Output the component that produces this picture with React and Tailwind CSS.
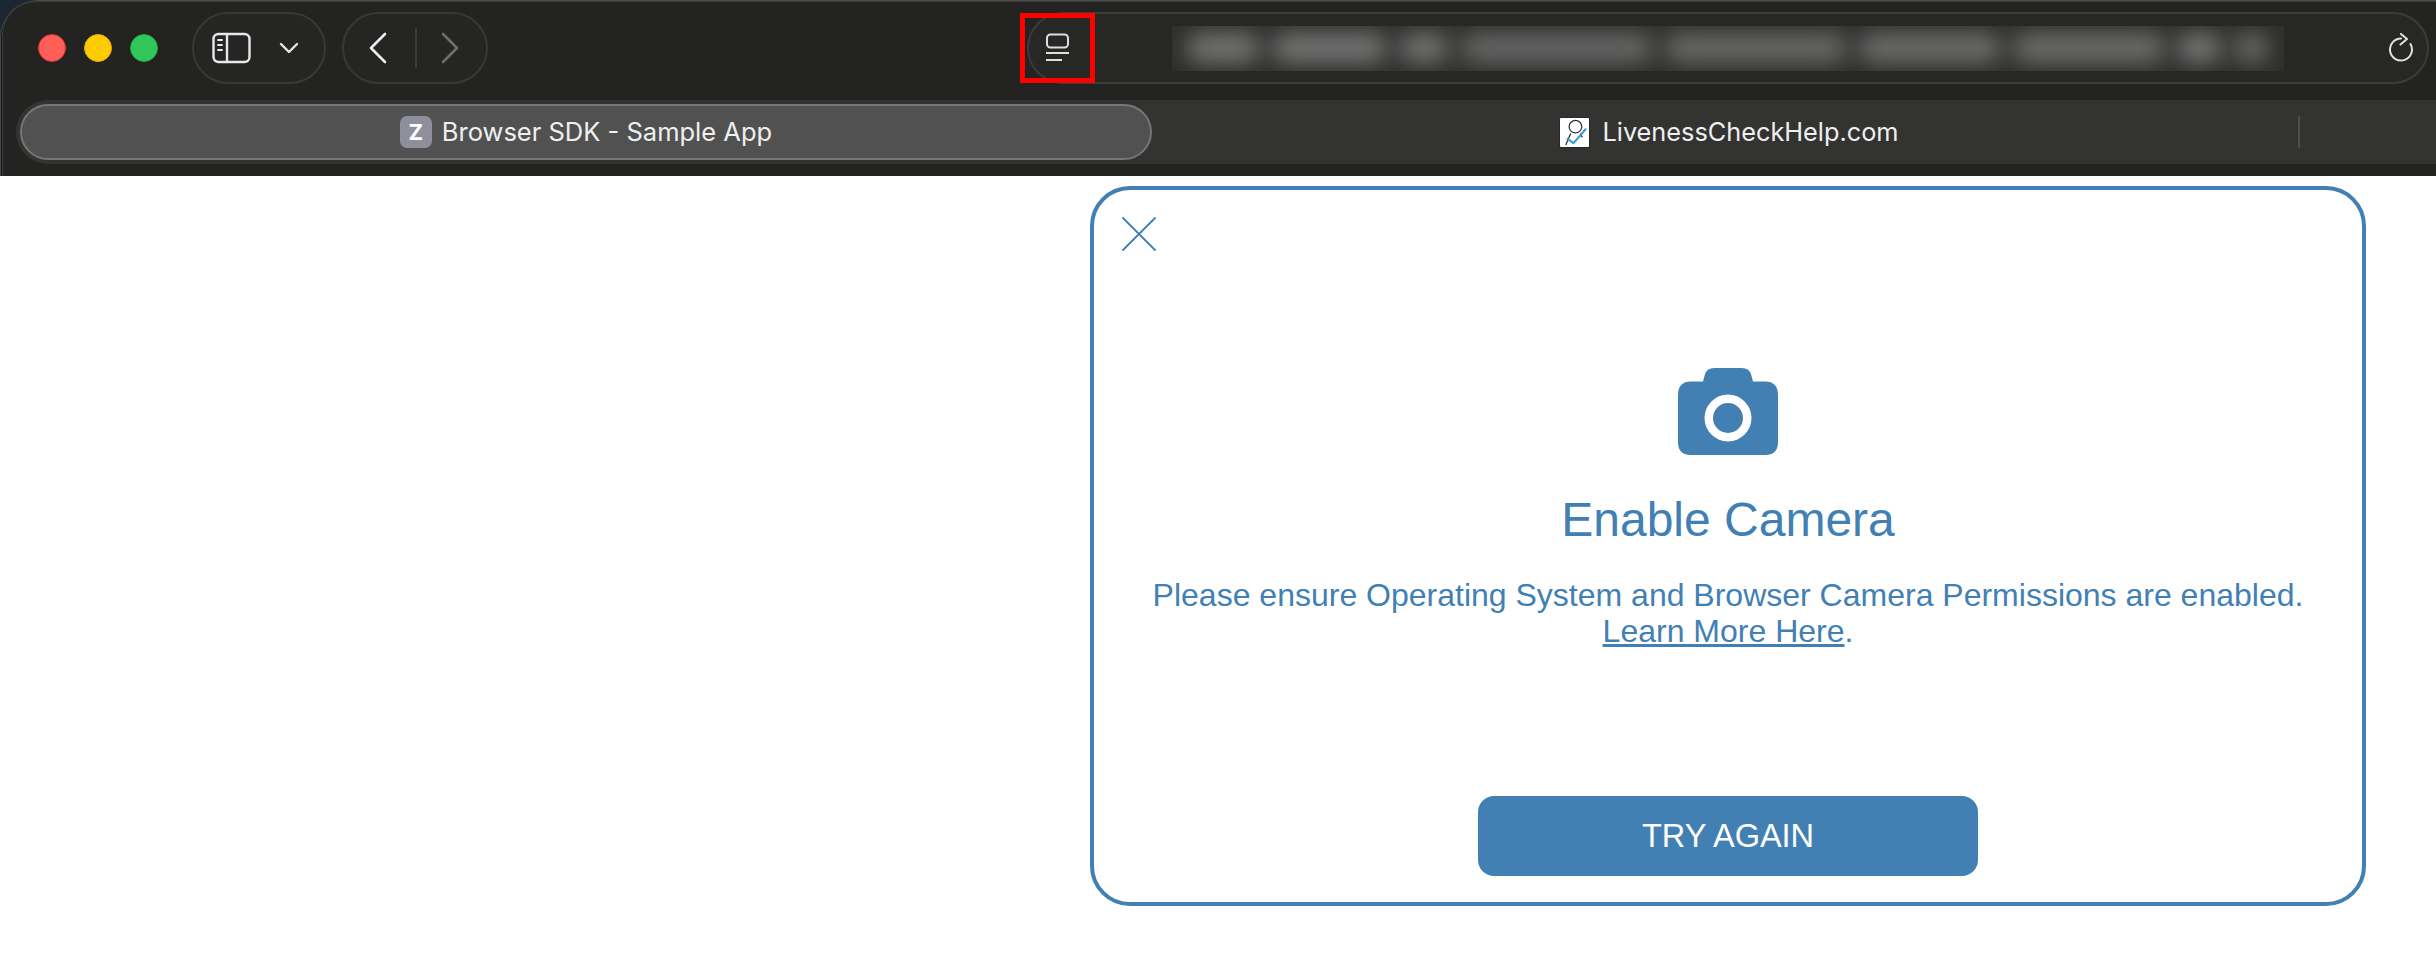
import React from 'react';

const TrafficLight = ({ className }) => (
  <span className={`w-[28px] h-[28px] rounded-full border ${className}`}></span>
);

const SidebarIcon = () => (
  <svg width="40" height="32" viewBox="0 0 40 32" fill="none" stroke="#e8e8e8" strokeWidth="2.4" strokeLinecap="round">
    <rect x="1.5" y="2" width="36" height="28" rx="5" />
    <path d="M15 2v28" />
    <path d="M6 8h4M6 13h4M6 18h4" strokeWidth="1.8" />
  </svg>
);

const ReaderIcon = () => (
  <svg width="26" height="30" viewBox="0 0 26 30" fill="none" stroke="#dedede" strokeWidth="2" className="shrink-0">
    <rect x="2" y="1.5" width="21" height="13" rx="3.5" />
    <path d="M1 20h23M1 27h16" />
  </svg>
);

const ReloadIcon = () => (
  <svg width="26" height="30" viewBox="0 0 26 30" fill="none" stroke="#e2e2e2" strokeWidth="2" strokeLinecap="round" strokeLinejoin="round" className="shrink-0">
    <path d="M13 5.500A11 11 0 1 0 22.500 11" />
    <path d="M13 1L19 6L12.500 11.500" />
  </svg>
);

const LivenessLogo = () => (
  <svg width="31" height="31" viewBox="0 0 32 32" className="shrink-0">
    <rect x="0.500" y="0.500" width="31" height="31" rx="1.500" fill="#fff" stroke="#222" />
    <circle cx="17" cy="10" r="6.500" fill="none" stroke="#333" strokeWidth="1.300" />
    <path d="M12 17L7 29M22 17l2 4" fill="none" stroke="#333" strokeWidth="1.300" />
    <path d="M8 22l7 5L28 12" fill="none" stroke="#3d9ad6" strokeWidth="2.200" />
  </svg>
);

const CameraIcon = () => (
  <svg width="100" height="87" viewBox="0 0 100 87">
    <path
      fillRule="evenodd"
      fill="#4280b4"
      d="M25 13.500 27 6Q29 0 36 0H64Q71 0 73 6L75 13.500H87Q100 13.500 100 27V74Q100 87 87 87H13Q0 87 0 74V27Q0 13.500 13 13.500ZM50 26.500A23.500 23.500 0 1 0 50 73.500A23.500 23.500 0 1 0 50 26.500ZM50 35A15 15 0 1 1 50 65A15 15 0 1 1 50 35Z"
    />
  </svg>
);

// sizes of the smudges over the address
const blurs = [
  { w: 75, c: 'bg-[#737372]' },
  { w: 117, c: 'bg-[#737372]' },
  { w: 52, c: 'bg-[#717170]' },
  { w: 194, c: 'bg-[#666665]' },
  { w: 184, c: 'bg-[#686867]' },
  { w: 144, c: 'bg-[#6c6c6b]' },
  { w: 154, c: 'bg-[#6c6c6b]' },
  { w: 47, c: 'bg-[#747473]' },
  { w: 36, c: 'bg-[#686867]' },
];

const App = () => {
  return (
    <div className="w-[2436px] h-[962px] bg-white overflow-hidden font-['Liberation_Sans',sans-serif]">
      {/* Browser chrome */}
      <div className="h-[176px] bg-[#1c2530]">
        <div className="h-full bg-[#111111] rounded-tl-[38px] border-l border-t border-[#4a4a4a]">
          <div className="h-full bg-[#232322] rounded-tl-[34px] ml-[1px] border-l border-t border-[#3c3c3c] font-['Inter',sans-serif]">
            <div className="flex items-center h-[82px] pt-[10px] pl-[35px] pr-[7px]">
              <div className="flex gap-[18px] w-[154px] shrink-0">
                <TrafficLight className="bg-[#ff5f57] border-[#e0303a]" />
                <TrafficLight className="bg-[#fecb00] border-[#e0ab10]" />
                <TrafficLight className="bg-[#32c758] border-[#1ca83a]" />
              </div>

              <div className="flex items-center shrink-0 w-[134px] h-[72px] rounded-full border-2 border-[#383837] bg-[#252524] pl-[18px]">
                <SidebarIcon />
                <svg width="20" height="14" viewBox="0 0 20 14" fill="none" stroke="#e8e8e8" strokeWidth="2.400" strokeLinecap="round" strokeLinejoin="round" className="ml-[27px]">
                  <path d="M2 3l8 8 8-8" />
                </svg>
              </div>

              <div className="flex items-center shrink-0 w-[146px] h-[72px] rounded-full border-2 border-[#383837] bg-[#252524] ml-[16px] pl-[24px]">
                <svg width="20" height="32" viewBox="0 0 20 32" fill="none" stroke="#efefef" strokeWidth="2.600" strokeLinecap="round" strokeLinejoin="round">
                  <path d="M17 2L3 16l14 14" />
                </svg>
                <span className="w-[2px] h-[40px] bg-[#3d3d3c] ml-[27px]"></span>
                <svg width="20" height="32" viewBox="0 0 20 32" fill="none" stroke="#6e6e6d" strokeWidth="2.600" strokeLinecap="round" strokeLinejoin="round" className="ml-[23px]">
                  <path d="M3 2l14 14L3 30" />
                </svg>
              </div>

              <div className="relative flex items-center flex-1 min-w-0 h-[72px] ml-[539px] rounded-full border-2 border-[#3c3d3b] bg-[#272726] pl-[16px] pr-[13px]">
                <ReaderIcon />
                <div className="flex items-center gap-[10px] flex-1 min-w-0 h-[45px] ml-[101px] mr-[104px] pl-[14px] overflow-hidden bg-[#2e2e2d]">
                  {blurs.map((b, i) => (
                    <span key={i} style={{ width: b.w }} className={`h-[30px] shrink-0 rounded-full blur-[11px] ${b.c}`}></span>
                  ))}
                </div>
                <ReloadIcon />
                {/* red marker drawn over the screenshot */}
                <span className="absolute left-[-9px] top-[-1px] w-[75px] h-[70px] border-[5px] border-[#fd0000]"></span>
              </div>
            </div>

            {/* Tabs */}
            <div className="flex items-center h-[64px] mt-[16px] ml-[13px] rounded-l-[32px] bg-[#333332] pl-[4px]">
              <div className="flex items-center justify-center gap-[10px] w-[1132px] h-[56px] rounded-full border-2 border-[#767674] bg-[#515151] shrink-0">
                <span className="w-[32px] h-[32px] rounded-[7px] bg-[#8f8f9c] flex items-center justify-center text-white text-[22px] font-bold">Z</span>
                <span className="text-[25.500px] text-[#efefef]">Browser SDK - Sample App</span>
              </div>
              <div className="flex items-center justify-center gap-[12px] flex-1 pl-[8px]">
                <LivenessLogo />
                <span className="text-[25.300px] text-[#efefef]">LivenessCheckHelp.com</span>
              </div>
              <span className="w-[2px] h-[32px] bg-[#4d4d4c] mr-[136px]"></span>
            </div>
          </div>
        </div>
      </div>

      {/* Page */}
      <div className="flex justify-end pt-[10px] pr-[70px]">
        <div className="relative flex flex-col items-center w-[1276px] h-[720px] rounded-[40px] border-[4px] border-[#4280b4] text-[#4280b4]">
          <svg width="34" height="34" viewBox="0 0 34 34" fill="none" stroke="#4280b4" strokeWidth="1.800" strokeLinecap="round" className="absolute left-[28px] top-[27px]">
            <path d="M1 1l32 32M33 1L1 33" />
          </svg>
          <div className="mt-[178px]">
            <CameraIcon />
          </div>
          <h1 className="mt-[37px] text-[48px] leading-[56px] font-normal">Enable Camera</h1>
          <p className="mt-[29px] text-[32px] leading-[36px] text-center">
            Please ensure Operating System and Browser Camera Permissions are enabled.
            <br />
            <a href="#" className="underline">Learn More Here</a>.
          </p>
          <button className="mt-[147px] w-[500px] h-[80px] rounded-[16px] bg-[#4280b4] text-white text-[32.500px]">TRY AGAIN</button>
        </div>
      </div>
    </div>
  );
};

export default App;
